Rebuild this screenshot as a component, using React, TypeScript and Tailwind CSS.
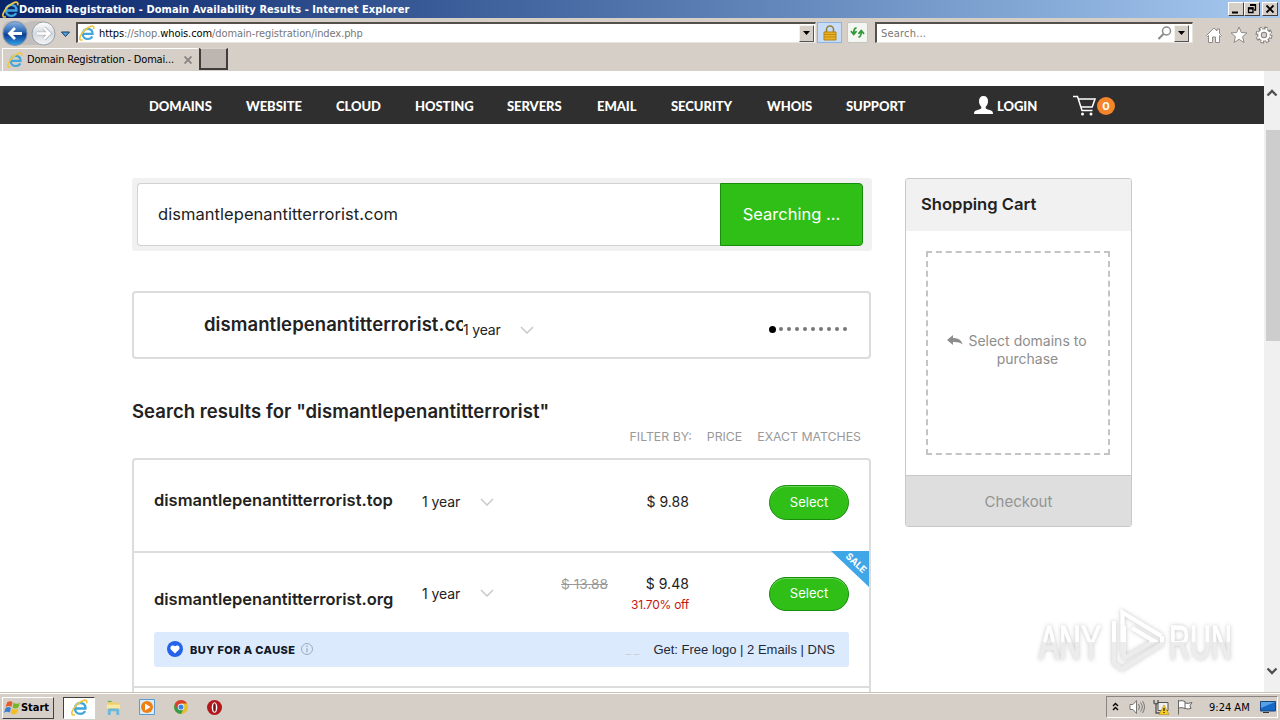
type RowProps = {
    name: string;
    price: string;
    oldPrice?: string;
    off?: string;
}

const navItems = [
    { label: 'DOMAINS', width: 'w-[97px]' },
    { label: 'WEBSITE', width: 'w-[90px]' },
    { label: 'CLOUD', width: 'w-[79px]' },
    { label: 'HOSTING', width: 'w-[92px]' },
    { label: 'SERVERS', width: 'w-[90px]' },
    { label: 'EMAIL', width: 'w-[74px]' },
    { label: 'SECURITY', width: 'w-[96px]' },
    { label: 'WHOIS', width: 'w-[79px]' },
    { label: 'SUPPORT', width: 'w-[128px]' },
];

const IeIcon = ({ className = 'w-4 h-4' }: { className?: string }) => (
    <svg viewBox="0 0 16 16" className={className} fill="none">
        <path d="M4.500 8.900h9.100c.2-3.300-1.900-5.100-4.800-5.100S3.700 6 3.700 9s2.100 5 5.100 5c2.200 0 3.700-1 4.400-2.600" stroke="#3fa6de" strokeWidth="2.200" />
        <path d="M3.500 7.500c.8-2.700 2.700-3.900 5.200-3.900" stroke="#86d0f5" strokeWidth="1.200" />
        <path d="M3.600 14.700C1.500 15.600.2 14.600 1.100 11.800 2.300 8 7 3.200 11.300 1.500c2.700-1 4.200-.1 3.300 2.600" stroke="#efc640" strokeWidth="1.600" />
    </svg>
);

const Chevron = () => (
    <svg viewBox="0 0 14 8" className="w-[14px] h-2 shrink-0" fill="none">
        <path d="M1 1l6 6 6-6" stroke="#c9c9c9" strokeWidth="1.500" />
    </svg>
);

const DropButton = () => (
    <div className="flex items-center justify-center w-[15px] h-[17px] bg-[#d6cfc8] border border-t-[#f5f2ee] border-l-[#f5f2ee] border-r-[#555] border-b-[#555]">
        <svg viewBox="0 0 7 4" className="w-[7px] h-1"><path d="M0 0h7L3.500 4z" fill="#000" /></svg>
    </div>
);

const TitleBar = () => (
    <div className="flex items-center h-[18px] pl-[2px] pr-[2px] bg-linear-to-r from-[#0a246a] to-[#a6caf0]">
        <IeIcon className="w-[17px] h-[17px]" />
        <span className="flex-1 pt-px text-[11px] leading-[17px] font-bold text-white whitespace-nowrap tracking-[0.070px]">Domain Registration - Domain Availability Results - Internet Explorer</span>
        {['min', 'restore', 'close'].map((kind) => (
            <div key={kind} className={`w-4 h-[14px] bg-[#d6cfc8] border border-t-white border-l-white border-r-[#404040] border-b-[#404040] ${kind === 'close' ? 'ml-[2px]' : ''}`}>
                <svg viewBox="0 0 14 12" className="w-[14px] h-3" fill="none" stroke="#000">
                    {kind === 'min' && <path d="M3 9.500h6" strokeWidth="2" />}
                    {kind === 'restore' && <><path d="M5 2h5.500v5H9" strokeWidth="1.300" /><path d="M5 2h6" strokeWidth="2" /><path d="M3.500 5h4.500v4.500h-4.500z" strokeWidth="1.300" /><path d="M3 5.500h5.500" strokeWidth="2" /></>}
                    {kind === 'close' && <path d="M3.500 2.500l7 7M10.500 2.500l-7 7" strokeWidth="1.800" />}
                </svg>
            </div>
        ))}
    </div>
);

const AddressBar = () => (
    <div className="flex items-center h-7 pt-px">
        <svg viewBox="0 0 72 28" className="w-[72px] h-7 shrink-0">
            <defs>
                <linearGradient id="back" x1="0" y1="0" x2="0" y2="1">
                    <stop offset="0" stopColor="#8cb5e6" />
                    <stop offset="0.450" stopColor="#2461b0" />
                    <stop offset="0.550" stopColor="#0c3f92" />
                    <stop offset="1" stopColor="#35a5ec" />
                </linearGradient>
                <linearGradient id="fwd" x1="0" y1="0" x2="0" y2="1">
                    <stop offset="0" stopColor="#fff" />
                    <stop offset="0.500" stopColor="#d4d9de" />
                    <stop offset="1" stopColor="#f3f6f8" />
                </linearGradient>
            </defs>
            <path d="M6 3q9-3 19 1 9-4 20-1 9 3 10 11-1 9-7 12H8Q2 22 2 14 2 7 6 3z" fill="#aaa9aa" opacity="0.450" />
            <circle cx="15" cy="14.500" r="12" fill="url(#back)" stroke="#7b8da7" />
            <path d="M22 14.500H9.500M15 9l-5.500 5.500L15 20" fill="none" stroke="#fff" strokeWidth="2.800" />
            <circle cx="43.500" cy="14.500" r="11.500" fill="url(#fwd)" stroke="#98a0a8" />
            <path d="M37 14.500h12.500M44 9l5.500 5.500L44 20" fill="none" stroke="#b5bac0" strokeWidth="4" />
            <path d="M37 14.500h12.500M44 9l5.500 5.500L44 20" fill="none" stroke="#fff" strokeWidth="2.400" />
            <path d="M61.500 13h8l-4 4.500z" fill="#4ba3e0" stroke="#173a66" />
        </svg>
        <div className="flex items-center w-[740px] h-[21px] ml-[4px] pl-px pr-px bg-white border-t-2 border-l-2 border-b border-r border-t-[#55504c] border-l-[#55504c] border-[#e8e4df]">
            <IeIcon />
            <span className="flex-1 ml-1 pt-[2px] text-[11px] text-[#777] tracking-[-0.090px] whitespace-nowrap"><span className="text-black">https</span>://shop.<span className="text-black">whois.com</span>/domain-registration/index.php</span>
            <DropButton />
        </div>
        <div className="flex items-center justify-center w-[25px] h-[21px] ml-px bg-[#c6dcf7] border border-[#8db2e3]">
            <svg viewBox="0 0 14 16" className="w-[14px] h-4">
                <path d="M3.500 8V4.500a3.500 3.500 0 017 0V8" fill="none" stroke="#98803a" strokeWidth="1.600" />
                <path d="M1 7h12v8H1z" fill="#eeb120" stroke="#b0811b" />
                <path d="M1.500 9.500h11M1.500 12h11" stroke="#bd8919" />
            </svg>
        </div>
        <div className="flex items-center justify-center w-[21px] h-[21px] ml-[5px] bg-[#f4f6f2] border border-[#c2c7c0] rounded-xs">
            <svg viewBox="0 0 16 16" className="w-[15px] h-[15px]" fill="none" stroke="#34983a" strokeWidth="1.800">
                <path d="M7 3Q4 3 4 9M1 6.500l3 3.500 3-3.500M9 13q3 0 3-6M9 9.500L12 6l3 3.500" />
            </svg>
        </div>
        <div className="flex items-center w-[318px] h-[21px] ml-[7px] pl-1 pr-[3px] bg-white border-t-2 border-l-2 border-b border-r border-t-[#55504c] border-l-[#55504c] border-[#e8e4df]">
            <span className="flex-1 pt-[2px] text-[11px] text-[#777] tracking-[0.200px]">Search...</span>
            <svg viewBox="0 0 14 14" className="w-[14px] h-[14px] mr-[2px]" fill="none" stroke="#8a8a8a"><circle cx="8.500" cy="5" r="4" strokeWidth="1.500" /><path d="M5.500 8l-5 5" strokeWidth="2" /></svg>
            <DropButton />
        </div>
        <div className="flex items-center gap-[7px] ml-[12px] pt-[4px]">
            <svg viewBox="0 0 18 18" className="w-[18px] h-[18px]" fill="#fff" stroke="#8f8b87"><path d="M1.500 9.500L9 2l3 3V3h2.500v4.500l2 2-1 1-1-1v7h-4V11h-3v5.500h-4v-7l-1 1z" /></svg>
            <svg viewBox="0 0 18 18" className="w-[18px] h-[18px]" fill="#fff" stroke="#8f8b87"><path d="M9 1l2.300 5.500 5.700.4-4.400 3.700L14 16.500l-5-3.200-5 3.200 1.400-5.900L1 6.900l5.700-.4z" /></svg>
            <svg viewBox="0 0 18 18" className="w-[18px] h-[18px]" fill="none">
                <circle cx="9" cy="9" r="6.800" stroke="#85817d" strokeWidth="3.400" strokeDasharray="3.340 2" />
                <circle cx="9" cy="9" r="4.500" stroke="#85817d" strokeWidth="4.600" />
                <circle cx="9" cy="9" r="6.500" stroke="#fff" strokeWidth="2" strokeDasharray="1.700 3.405" strokeDashoffset="-.8" />
                <circle cx="9" cy="9" r="4.500" stroke="#fff" strokeWidth="2.600" />
            </svg>
        </div>
    </div>
);

const TabBar = () => (
    <div className="flex h-[25px] pt-[2px] pl-[2px]">
        <div className="flex items-center w-[196px] pl-1 border-t border-l border-white">
            <IeIcon />
            <span className="w-[149px] ml-1 pt-px text-[11px] text-black whitespace-nowrap tracking-[-0.190px]">Domain Registration - Domai...</span>
            <svg viewBox="0 0 8 8" className="w-2 h-2 ml-2 shrink-0"><path d="M.5.5l7 7M7.500.5l-7 7" stroke="#8a8581" strokeWidth="1.900" /></svg>
        </div>
        <div className="w-[29px] h-[22px] ml-px bg-[#bdb5b0] border-2 border-t border-t-[#d9d4ce] border-l-[#403c3a] border-r-[#403c3a] border-b-[#403c3a]" />
    </div>
);

const Navbar = () => (
    <nav className="flex items-center h-[38px] mt-[15px] pl-[149px] bg-[#2f2f2f] font-['Lato'] font-black text-[13px] text-white tracking-[-0.050px]">
        {navItems.map((item) => (
            <span key={item.label} className={`${item.width} shrink-0 pt-[3px]`}>{item.label}</span>
        ))}
        <svg viewBox="0 0 19 18" className="w-[19px] h-[18px] shrink-0" fill="#fff">
            <path d="M9.500 0C12.500 0 14 2 14 5s-1 4.500-2.300 5.800v1.400c.8 1 3.300 1.500 5.300 2.300 1.500.6 2 1.500 2 3.500H0c0-2 .5-2.900 2-3.500 2-.8 4.500-1.300 5.300-2.300v-1.400C6 9.500 5 8 5 5s1.500-5 4.500-5z" />
        </svg>
        <span className="w-[79px] pl-1 pt-[3px]">LOGIN</span>
        <svg viewBox="0 0 24 22" className="w-6 h-[22px] shrink-0 mt-[2px]" fill="none" stroke="#fff" strokeWidth="1.500">
            <path d="M1 1.500h4.500l4.500 14h10.500M6.500 4H23l-2.800 8H9" />
            <circle cx="10.500" cy="19" r="1.500" fill="#fff" stroke="none" /><circle cx="19" cy="19" r="1.500" fill="#fff" stroke="none" />
        </svg>
        <span className="flex items-center justify-center w-[18px] h-[18px] mt-[2px] ml-px rounded-full bg-[#f58529] text-[12px]">0</span>
    </nav>
);

const SelectButton = ({ className = 'h-[35px]' }: { className?: string }) => (
    <button className={`w-20 rounded-full bg-[#2fbf17] border border-[#178d0c] shadow-[inset_0_1px_0_#6ed45e] text-[13px] text-white ${className}`}>Select</button>
);

const ResultRow = ({ name, price, oldPrice, off }: RowProps) => (
    <div className={`flex px-5 ${off ? 'h-[79px] pt-6' : 'h-[91px] pt-[25px]'}`}>
        <div className={`w-[268px] text-[16.500px] leading-6 font-semibold whitespace-nowrap ${off ? 'pt-[10px]' : 'pt-[3px]'}`}>{name}</div>
        <div className={`flex items-center justify-between w-[72px] text-[14px] tracking-[-0.100px] whitespace-nowrap ${off ? 'h-8' : 'h-[33px]'}`}>1 year<Chevron /></div>
        <div className="w-[114px] text-right text-[13.700px] leading-[14px] text-[#999] line-through">{oldPrice}</div>
        <div className={`w-[81px] text-right text-[14px] tracking-[0.050px] ${off ? 'leading-[14px]' : 'leading-[34px]'}`}>
            {price}
            {off && <div className="mt-[7px] text-[12px] text-[#c5160c] tracking-[-0.250px]">{off}</div>}
        </div>
        <div className="ml-20"><SelectButton className={off ? 'h-[34px] pb-px' : 'h-[35px]'} /></div>
    </div>
);

const CauseBanner = () => (
    <div className="flex items-center h-[35px] mx-5 pl-[13px] pr-[14px] rounded-[3px] bg-[#dceafd]">
        <svg viewBox="0 0 16 16" className="w-4 h-4 -mt-[2px]">
            <circle cx="8" cy="8" r="8" fill="#2563eb" />
            <path d="M8 12.500L3.900 8.400C2.300 6 5 3 8 5.200c3-2.200 5.700.8 4.100 3.200z" fill="#fff" />
        </svg>
        <span className="ml-[7px] pt-px text-[11px] font-extrabold text-[#111827] tracking-[0.380px]">BUY FOR A CAUSE</span>
        <svg viewBox="0 0 12 12" className="w-3 h-3 ml-[6px] -mt-[2px]" fill="none" stroke="#9dacbf"><circle cx="6" cy="6" r="5.500" /><path d="M6 2.500V4M6 5.200v4" strokeWidth="1.300" /></svg>
        <span className="ml-auto mr-[14px] text-[10px] text-[#c4cbd5] font-['Liberation_Sans']">_ _</span>
        <span className="pt-px font-['Liberation_Sans'] text-[13px] text-[#1f2937]">Get: Free logo | 2 Emails | DNS</span>
    </div>
);

const Cart = () => (
    <aside className="w-[227px] h-[349px] border border-[#c8c8c8] rounded-[3px] overflow-hidden">
        <div className="h-[52px] pl-[15px] pt-[13px] bg-[#f1f1f1] text-[16.600px] leading-6 font-semibold">Shopping Cart</div>
        <div className="flex items-center h-[244px] px-5">
            <div className="flex w-[184px] h-[204px] pl-[19px] pt-[79px] border-2 border-dashed border-[#c4c4c4] text-[14px] leading-[18px] text-[#8d8d8d]">
                <svg viewBox="0 0 16 11" className="w-4 h-[11px] mt-[3px] mr-[5px] shrink-0" fill="#8d8d8d">
                    <path d="M0 5L6 0v3c5 0 8.500 2 9.700 6.500C13 7.300 10 6.800 6 7v3z" />
                </svg>
                <div className="w-[119px] text-center whitespace-nowrap">Select domains to<br />purchase</div>
            </div>
        </div>
        <div className="h-[51px] border-t border-[#c8c8c8] bg-[#dedede] text-center text-[15px] leading-[51px] text-[#939393]">Checkout</div>
    </aside>
);

const Watermark = () => (
    <svg viewBox="0 0 220 76" className="absolute left-[1030px] top-[602px] w-[220px] h-[76px] overflow-visible">
        <defs>
            <linearGradient id="fade" x1="0" y1="0" x2="0" y2="76" gradientUnits="userSpaceOnUse">
                <stop offset="0.520" stopColor="#fff" />
                <stop offset="0.530" stopColor="#ececec" />
            </linearGradient>
            <filter id="glow" x="-10%" y="-20%" width="120%" height="140%"><feDropShadow dx="0" dy="0" stdDeviation="2" floodColor="#777" floodOpacity="0.450" /></filter>
        </defs>
        <g filter="url(#glow)" fill="url(#fade)" stroke="url(#fade)" strokeWidth="1" fontFamily="Liberation Sans Narrow, Liberation Sans" fontSize="49">
            <text x="9" y="57" textLength="62" lengthAdjust="spacingAndGlyphs">ANY</text>
            <text x="139" y="57" textLength="63" lengthAdjust="spacingAndGlyphs">RUN</text>
            <path d="M92.500 52V10.500l39 23.500M84 19v42l8 6 40-25v-8M94 24v32l30-17-22-13" fill="none" strokeWidth="4" />
        </g>
    </svg>
);

const Scrollbar = () => (
    <div className="flex flex-col items-center w-4 bg-[#f0f0f0]">
        <svg viewBox="0 0 12 8" className="w-3 h-2 mt-[18px]" fill="none"><path d="M1.500 6.500L6 2l4.500 4.500" stroke="#505050" strokeWidth="2.300" /></svg>
        <div className="w-[14px] h-[211px] mt-[33px] ml-px bg-[#cdcdcd]" />
        <svg viewBox="0 0 12 8" className="w-3 h-2 mt-auto mb-[17px]" fill="none"><path d="M1.500 1.500L6 6l4.500-4.500" stroke="#505050" strokeWidth="2.300" /></svg>
    </div>
);

const Page = () => (
    <div className="flex-1 h-full overflow-hidden bg-white">
        <Navbar />
        <div className="flex gap-[33px] mt-[54px] pl-[132px] font-['Inter'] text-[#222]">
            <main className="w-[740px]">
                <div className="flex h-[73px] p-[5px] pr-[9px] rounded-[3px] bg-[#f1f1f1]">
                    <div className="flex-1 h-[63px] pl-5 bg-white border border-r-0 border-[#d2d2d2] rounded-l-[4px] text-[16.500px] leading-[61px] tracking-[0.050px]">dismantlepenantitterrorist.com</div>
                    <div className="w-[143px] h-[63px] rounded-r-[4px] bg-[#2fbf17] border border-[#178d0c] text-center text-[16.500px] leading-[60px] text-white">Searching ...</div>
                </div>
                <div className="flex w-[739px] h-[68px] mt-10 pl-[70px] border-2 border-[#dcdcdc] rounded-[4px]">
                    <div className="w-[259px] overflow-hidden whitespace-nowrap text-[18.500px] leading-[63px] font-semibold tracking-[0.070px]">dismantlepenantitterrorist.com</div>
                    <div className="flex items-center justify-between w-[71px] h-[73px] text-[14px] tracking-[-0.200px] whitespace-nowrap">1 year<Chevron /></div>
                    <div className="flex items-center gap-1 h-[72px] ml-auto mr-[22px]">
                        <span className="w-[7px] h-[7px] -mr-[1px] rounded-full bg-black" />
                        {Array.from({ length: 9 }, (_, i) => <span key={i} className="w-1 h-1 rounded-full bg-[#777]" />)}
                    </div>
                </div>
                <h2 className="mt-[40px] text-[18.500px] leading-6 font-semibold tracking-[0.050px]">Search results for "dismantlepenantitterrorist"</h2>
                <div className="flex justify-end gap-[15px] mt-[6px] pr-[11px] text-[12.300px] leading-4 text-[#999]">
                    <span>FILTER BY:</span><span>PRICE</span><span>EXACT MATCHES</span>
                </div>
                <div className="w-[739px] h-[260px] mt-[13px] border-2 border-[#dcdcdc] rounded-[4px]">
                    <ResultRow name="dismantlepenantitterrorist.top" price="$ 9.88" />
                    <div className="relative h-[137px] border-y-2 border-[#dcdcdc]">
                        <svg viewBox="0 0 38 36" className="absolute right-0 -top-[2px] w-[38px] h-9">
                            <path d="M0 0h38v36z" fill="#3fa6e8" />
                            <text x="0" y="0" transform="translate(14 6) rotate(43)" fill="#fff" fontSize="9.500" fontWeight="bold">SALE</text>
                        </svg>
                        <ResultRow name="dismantlepenantitterrorist.org" price="$ 9.48" oldPrice="$ 13.88" off="31.70% off" />
                        <CauseBanner />
                    </div>
                </div>
            </main>
            <Cart />
        </div>
    </div>
);

const Taskbar = () => (
    <div className="flex items-center h-7 bg-[#d6cfc8] border-t border-[#c8c2bb] shadow-[inset_0_1px_0_#fff] pl-[2px] text-[11px] text-black">
        <div className="flex items-center w-[52px] h-[22px] mt-[2px] pl-px border border-t-white border-l-white border-r-[#404040] border-b-[#404040]">
            <svg viewBox="0 0 16 16" className="w-[17px] h-[17px]">
                <path d="M3 3q3-2 5 0L7 7.500q-2-2-5.500 0z" fill="#e85b28" /><path d="M9 3.500q3 2 6 0L13.500 8q-3 2-5.500 0z" fill="#79b52b" />
                <path d="M1.500 8.500q3-2 5 0L5.500 13q-2-2-5.500 0z" fill="#3b7fd0" /><path d="M7.500 9q3 2 6 0L12 13.500q-3 2-5.500 0z" fill="#f6bd20" />
            </svg>
            <span className="pt-px font-bold tracking-[-0.050px]">Start</span>
        </div>
        <div className="flex items-center justify-center w-[32px] h-[22px] ml-[9px] mt-[2px] bg-white border border-t-[#404040] border-l-[#404040] border-white"><IeIcon className="w-[17px] h-[17px]" /></div>
        <svg viewBox="0 0 18 18" className="w-[17px] h-[17px] ml-[10px] mt-px"><path d="M2 3h6l1 1h7v9H2z" fill="#edcf6f" /><path d="M3 2h4v1H3z" fill="#49a94e" /><path d="M2 6h14v4H2z" fill="#f9e8a1" /><path d="M3 17v-5q0-2 2-2h8q2 0 2 2v5h-3v-4H6v4z" fill="#69b8df" /></svg>
        <svg viewBox="0 0 16 16" className="w-4 h-4 ml-[17px]"><path d="M.5.5h15v15H.5z" fill="#d9ecfa" stroke="#5b9bd0" /><circle cx="8" cy="8" r="6" fill="#f07f13" /><path d="M6 4.500L11.500 8 6 11.500z" fill="#fff" /></svg>
        <svg viewBox="0 0 16 16" className="w-[14px] h-[14px] ml-[19px] mt-px"><circle cx="8" cy="8" r="8" fill="#e6bf2c" /><path d="M8 8L1.100 4A8 8 0 008 16l3-6z" fill="#379b4b" /><path d="M8 0A8 8 0 0114.900 4H8L3 9 1.100 4A8 8 0 018 0z" fill="#d8412f" /><circle cx="8" cy="8" r="3.700" fill="#fff" /><circle cx="8" cy="8" r="2.900" fill="#3a82e4" /></svg>
        <svg viewBox="0 0 16 16" className="w-[15px] h-[15px] ml-[19px] mt-[2px]"><circle cx="8" cy="8" r="8" fill="#b3161b" /><ellipse cx="8" cy="8" rx="3" ry="5.500" fill="#fff" /><ellipse cx="8" cy="8" rx="1.400" ry="4.500" fill="#7c0f13" /></svg>
        <div className="flex items-center w-[172px] h-[22px] ml-auto mr-[2px] mt-px pl-[5px] border border-t-[#8a8580] border-l-[#8a8580] border-white">
            <svg viewBox="0 0 7 9" className="w-[7px] h-[9px] -mt-[2px]" fill="none" stroke="#000" strokeWidth="1.400"><path d="M1 4l2.500-2.500L6 4M1 8l2.500-2.500L6 8" /></svg>
            <svg viewBox="0 0 16 16" className="w-4 h-4 ml-[10px]" fill="#fff" stroke="#777"><path d="M1 5.500h3l3.500-4v13L4 10.500H1z" /><path d="M9.500 5q2 3 0 6M11.500 3.500q3.500 4.500 0 9M13.500 2q4 6 0 12" fill="none" /></svg>
            <svg viewBox="0 0 17 16" className="w-[17px] h-4 ml-2"><path d="M5 3.500h10v8H5z" fill="#eee" stroke="#555" /><path d="M1 1v3q2 2 4 0V1M3 5v9h4" fill="none" stroke="#555" strokeWidth="1.300" /><path d="M11 6l5 9.500H6z" fill="#f8ce20" stroke="#b58a13" strokeWidth=".6" /><path d="M11 9v3M11 13v1" stroke="#222" strokeWidth="1.300" /></svg>
            <svg viewBox="0 0 16 16" className="w-4 h-4 ml-[7px]" fill="#fff" stroke="#666"><path d="M1.500 1v14.500M2 2q3-1 6 .5v7q-3-1.500-6-.5M8 4q3 1 7-.5l-2 3 1 3q-3 1-6 0" /></svg>
            <span className="ml-[16px] w-[51px] pt-[2px] whitespace-nowrap">9:24 AM</span>
            <svg viewBox="0 0 16 14" className="w-4 h-[14px]"><path d="M.5 1.500h15v9.500H.5z" fill="#1768c4" stroke="#18457d" /><path d="M1 2h14L1 8z" fill="#56a2e7" /><path d="M3 12.500h6" stroke="#333" /></svg>
        </div>
    </div>
);

const App = () => {
    return (
        <div className="relative flex flex-col w-[1280px] h-[720px] overflow-hidden bg-[#d6cfc8] font-['DejaVu_Sans_Condensed','DejaVu_Sans',sans-serif]">
            <TitleBar />
            <AddressBar />
            <TabBar />
            <div className="flex h-[621px]">
                <Page />
                <Scrollbar />
            </div>
            <Taskbar />
            <Watermark />
        </div>
    );
};

export default App;
